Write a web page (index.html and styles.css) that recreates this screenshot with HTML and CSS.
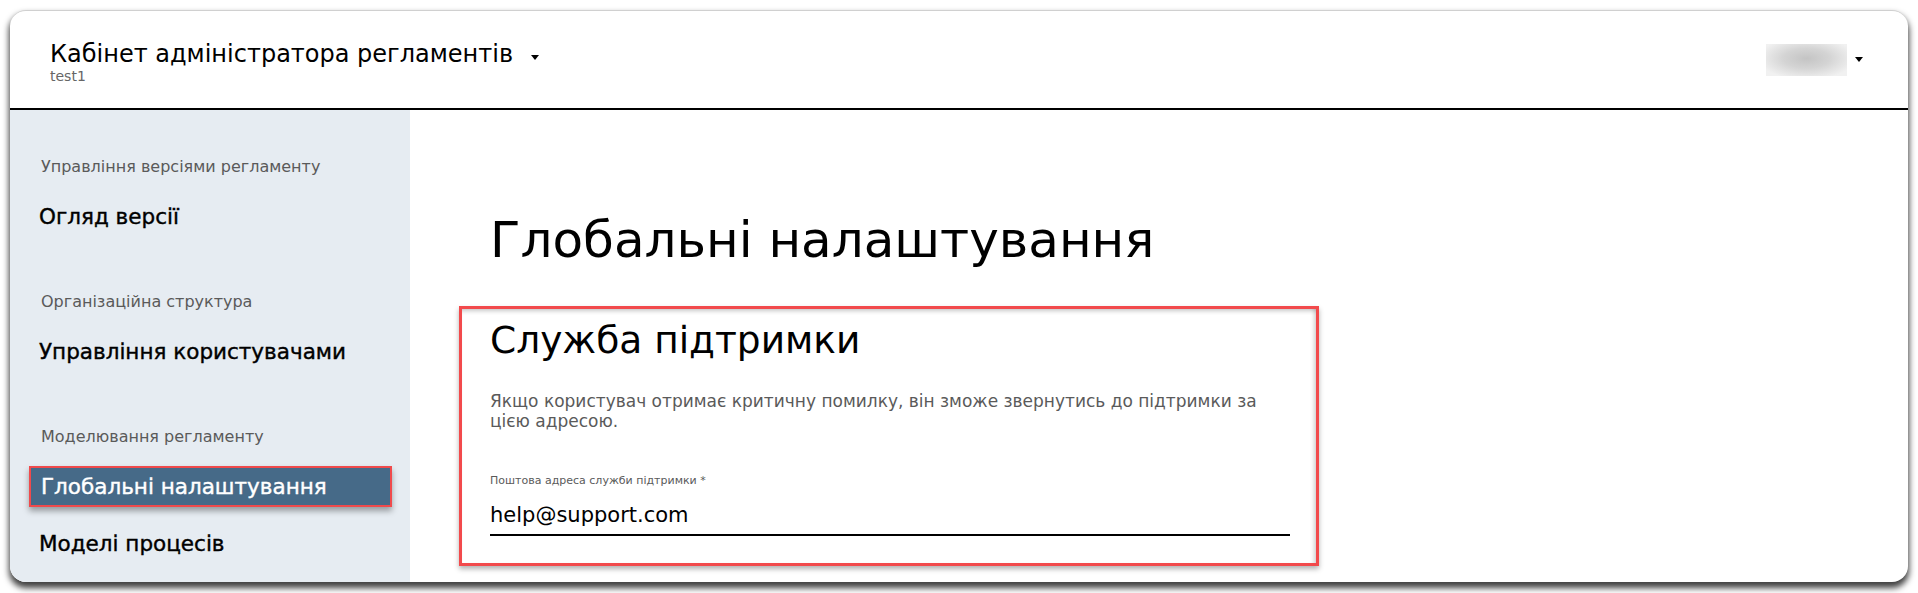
FILE: index.html
```html
<!DOCTYPE html>
<html lang="uk">
<head>
  <meta charset="UTF-8">
  <meta name="viewport" content="width=device-width, initial-scale=1.0">
  <title>Кабінет адміністратора регламентів</title>
  <link rel="stylesheet" href="styles.css">
</head>
<body>
  <div class="window">
    <header class="topbar">
      <div class="app-title">
        <div class="app-name">
          <span>Кабінет адміністратора регламентів</span>
          <span class="caret"></span>
        </div>
        <div class="app-sub">test1</div>
      </div>
      <div class="user">
        <div class="avatar"></div>
        <span class="caret"></span>
      </div>
    </header>

    <div class="layout">
      <nav class="sidebar">
        <div class="nav-group">
          <div class="nav-label">Управління версіями регламенту</div>
          <a class="nav-item">Огляд версії</a>
        </div>
        <div class="nav-group">
          <div class="nav-label">Організаційна структура</div>
          <a class="nav-item">Управління користувачами</a>
        </div>
        <div class="nav-group">
          <div class="nav-label">Моделювання регламенту</div>
          <a class="nav-item active">Глобальні налаштування</a>
          <a class="nav-item">Моделі процесів</a>
        </div>
      </nav>

      <main class="content">
        <h1>Глобальні налаштування</h1>
        <section class="card">
          <h2>Служба підтримки</h2>
          <p class="card-text">Якщо користувач отримає критичну помилку, він зможе звернутись до підтримки за цією адресою.</p>
          <label class="field">
            <span class="field-label">Поштова адреса служби підтримки *</span>
            <span class="field-input">help@support.com</span>
          </label>
        </section>
      </main>
    </div>
  </div>
</body>
</html>
```

FILE: styles.css
```css
html, body {
  margin: 0;
  padding: 0;
  background-color: #fff;
  height: 593px;
  overflow: hidden;
}
body {
  font-family: "DejaVu Sans", "Noto Sans", sans-serif;
  color: #000;
}
.window {
  margin: 10px 10px 0 10px;
  height: 571px;
  border-top: 1px solid #d0d0d0;
  border-radius: 16px;
  background-color: #fff;
  box-shadow: 0 5px 6px 1px rgba(0,0,0,0.75);
  overflow: hidden;
  display: flex;
  flex-direction: column;
}
.topbar {
  height: 97px;
  flex-shrink: 0;
  border-bottom: 2px solid #000;
  display: flex;
  align-items: center;
  justify-content: space-between;
  padding: 0 45px 0 40px;
}
.app-title {
  margin-top: 4px;
}
.app-name {
  font-size: 24px;
  line-height: 28px;
  display: flex;
  align-items: center;
  gap: 18px;
}
.app-sub {
  font-size: 14px;
  line-height: 16px;
  color: #666;
}
.caret {
  width: 0;
  height: 0;
  border-left: 4px solid transparent;
  border-right: 4px solid transparent;
  border-top: 5px solid #000;
  margin-top: 8px;
}
.user {
  display: flex;
  align-items: center;
  gap: 8px;
}
.user .caret {
  margin-top: 0;
}
.avatar {
  width: 81px;
  height: 32px;
  background: radial-gradient(ellipse at 50% 45%, #c4c4c4 0%, #d4d4d4 40%, #f1f1f1 85%);
}
.layout {
  flex: 1;
  display: flex;
  min-height: 0;
}
.sidebar {
  width: 400px;
  flex-shrink: 0;
  background-color: #e6ecf2;
  padding-top: 47px;
  box-sizing: border-box;
}
.nav-group + .nav-group {
  margin-top: 55px;
}
.nav-label {
  font-size: 16px;
  line-height: 20px;
  color: #5a5a5a;
  padding-left: 31px;
  margin-bottom: 19px;
}
.nav-item {
  display: block;
  margin: 0 18px 16px 19px;
  padding: 0 10px;
  height: 41px;
  line-height: 41px;
  box-sizing: border-box;
  font-size: 21.5px;
  color: #000;
  -webkit-text-stroke: 0.4px #000;
}
.nav-item.active {
  background-color: #466a88;
  color: #fff;
  -webkit-text-stroke: 0.4px #fff;
  line-height: 37px;
  border: 2px solid #f04a4c;
  box-shadow: 0 4px 6px rgba(0,0,0,0.35);
}
.content {
  flex: 1;
  padding-left: 80px;
}
.content h1 {
  font-size: 50px;
  font-weight: 400;
  margin: 100px 0 36px 0;
  line-height: 60px;
}
.card {
  width: 860px;
  box-sizing: border-box;
  margin-left: -31px;
  border: 3px solid #f24a4c;
  padding: 8px 26px 27px 28px;
  box-shadow: 0 3px 5px rgba(0,0,0,0.3), inset 0 5px 4px -3px rgba(0,0,0,0.22), inset -5px 0 4px -3px rgba(0,0,0,0.18);
}
.card h2 {
  font-size: 37.5px;
  font-weight: 400;
  margin: 0 0 28px 0;
  line-height: 46px;
}
.card-text {
  font-size: 17px;
  line-height: 20px;
  color: #5a5a5a;
  margin: 0 0 43px 0;
  max-width: 800px;
}
.field {
  display: block;
  width: 800px;
}
.field-label {
  display: block;
  font-size: 11px;
  line-height: 14px;
  color: #5a5a5a;
  margin-bottom: 10px;
}
.field-input {
  display: block;
  font-size: 21px;
  line-height: 34px;
  border-bottom: 2px solid #000;
  padding-bottom: 2px;
}
```
